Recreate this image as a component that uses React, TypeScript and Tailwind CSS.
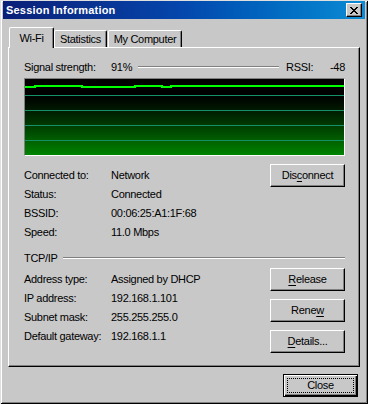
import type { ReactNode } from "react";

const raised =
  "border border-t-white border-l-white border-r-black border-b-black shadow-[inset_-1px_-1px_#808080]";

function Button({ children }: { children: ReactNode }) {
  return (
    <button
      type="button"
      className={`flex h-[23px] w-[75px] shrink-0 items-center justify-center bg-[#c8c8c8] ${raised} text-[11px] leading-none text-black`}
    >
      {children}
    </button>
  );
}

function Row({ label, value }: { label: string; value: string }) {
  return (
    <div className="flex h-[19px] items-center">
      <span className="w-[87px] shrink-0">{label}</span>
      <span>{value}</span>
    </div>
  );
}

function Etched({ className = "" }: { className?: string }) {
  return <div className={`h-[2px] border-t border-b border-t-[#808080] border-b-white ${className}`} />;
}

export default function App() {
  return (
    <div className="h-[404px] w-[368px] bg-[#c8c8c8] px-[3px] pt-[1px] font-['Liberation_Sans',Arial,sans-serif] text-[11px] leading-none tracking-[-0.3px] text-black shadow-[inset_1px_1px_#dfdfdf,inset_-1px_-1px_#000,inset_2px_2px_#fff,inset_-2px_-2px_#808080]">
      {/* title bar */}
      <div className="flex h-[18px] items-center justify-between bg-gradient-to-r from-[#0a1f78] via-[#0447ad] to-[#0e8bd4] pl-[3px] pr-[3px]">
        <span className="text-[11px] font-bold tracking-[0.2px] text-white">Session Information</span>
        <div className={`flex h-[14px] w-[16px] items-center justify-center bg-[#c8c8c8] ${raised}`}>
          <svg width="8" height="7" viewBox="0 0 8 7" shapeRendering="crispEdges">
            <path d="M0 0h2v1H0zM6 0h2v1H6zM1 1h2v1H1zM5 1h2v1H5zM2 2h4v1H2zM3 3h2v1H3zM2 4h4v1H2zM1 5h2v1H1zM5 5h2v1H5zM0 6h2v1H0zM6 6h2v1H6z" fill="#000" />
          </svg>
        </div>
      </div>

      {/* tabs */}
      <div className="ml-[6px] mt-[8px] flex h-[20px] items-end">
        <div className="relative z-10 -mb-px flex h-[21px] w-[45px] items-center justify-center rounded-t-[2px] border border-b-0 border-t-white border-l-white border-r-black bg-[#c8c8c8] shadow-[inset_-1px_0_#808080]">
          Wi-Fi
        </div>
        <div className="flex h-[17px] w-[53px] items-center justify-center rounded-t-[2px] border border-b-0 border-t-white border-l-white border-r-black shadow-[inset_-1px_0_#808080]">
          Statistics
        </div>
        <div className="ml-[1px] flex h-[17px] w-[74px] items-center justify-center rounded-t-[2px] border border-b-0 border-t-white border-l-white border-r-black shadow-[inset_-1px_0_#808080]">
          My Computer
        </div>
      </div>

      {/* panel */}
      <div className={`ml-[5px] h-[320px] w-[352px] ${raised} pl-[15px] pr-[14px] pt-[11px]`}>
        <div className="flex h-[16px] items-center">
          <span className="w-[87px] shrink-0">Signal strength:</span>
          <span>91%</span>
          <Etched className="ml-[6px] mr-[7px] flex-1" />
          <span className="w-[40px]">RSSI:</span>
          <span className="w-[19px] text-right">-48</span>
        </div>

        {/* graph */}
        <div className="mt-[3px] h-[78px] w-[321px] border border-t-[#808080] border-l-[#808080] border-r-white border-b-white bg-gradient-to-b from-black from-[8%] to-[#008400]">
          <svg width="319" height="76" viewBox="0 0 319 76" shapeRendering="crispEdges" className="block">
            {[16, 31, 46, 61].map((y) => (
              <rect key={y} x="0" y={y} width="319" height="1" fill="#169066" />
            ))}
            <path
              d="M0 8H10V7H57V8H110V7H137V8H146V7H319"
              fill="none"
              stroke="#00ff00"
              strokeWidth="2"
            />
          </svg>
        </div>

        {/* connection */}
        <div className="mt-[8px] flex justify-between">
          <div className="pt-[2px]">
            <Row label="Connected to:" value="Network" />
            <Row label="Status:" value="Connected" />
            <Row label="BSSID:" value="00:06:25:A1:1F:68" />
            <Row label="Speed:" value="11.0 Mbps" />
          </div>
          <Button>
            Dis<span className="underline underline-offset-2">c</span>onnect
          </Button>
        </div>

        {/* tcp/ip */}
        <div className="mt-[8px] flex h-[16px] items-center">
          <span>TCP/IP</span>
          <Etched className="ml-[5px] flex-1" />
        </div>
        <div className="flex justify-between">
          <div className="pt-[4px]">
            <Row label="Address type:" value="Assigned by DHCP" />
            <Row label="IP address:" value="192.168.1.101" />
            <Row label="Subnet mask:" value="255.255.255.0" />
            <Row label="Default gateway:" value="192.168.1.1" />
          </div>
          <div className="flex flex-col gap-[8px] pt-[2px]">
            <Button>
              <span className="underline underline-offset-2">R</span>elease
            </Button>
            <Button>
              Rene<span className="underline underline-offset-2">w</span>
            </Button>
            <Button>
              <span className="underline underline-offset-2">D</span>etails...
            </Button>
          </div>
        </div>
      </div>

      {/* footer */}
      <div className="mt-[7px] flex justify-end pr-[7px]">
        <button
          type="button"
          className="relative flex h-[23px] w-[75px] items-center justify-center border border-black bg-[#c8c8c8] text-[11px] leading-none shadow-[inset_1px_1px_#fff,inset_-1px_-1px_#000,inset_-2px_-2px_#808080]"
        >
          <span className="pointer-events-none absolute inset-[3px] border border-dotted border-black" />
          Close
        </button>
      </div>
    </div>
  );
}
